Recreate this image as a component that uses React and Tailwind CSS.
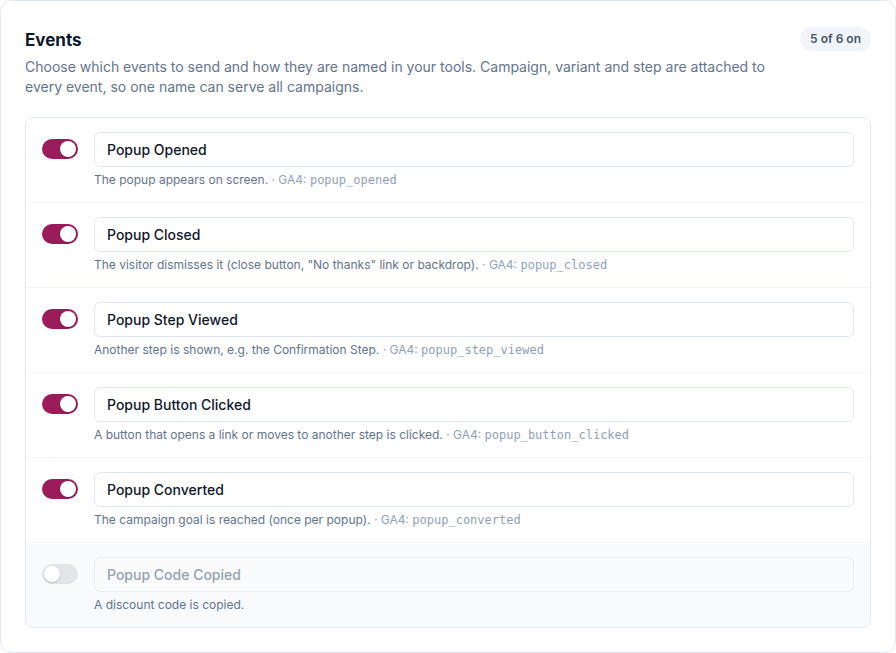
import { useState } from "react";

const EVENTS = [
  {
    id: "opened",
    name: "Popup Opened",
    hint: "The popup appears on screen.",
    ga4: "popup_opened",
    on: true,
  },
  {
    id: "closed",
    name: "Popup Closed",
    hint: 'The visitor dismisses it (close button, "No thanks" link or backdrop).',
    ga4: "popup_closed",
    on: true,
  },
  {
    id: "step",
    name: "Popup Step Viewed",
    hint: "Another step is shown, e.g. the Confirmation Step.",
    ga4: "popup_step_viewed",
    on: true,
  },
  {
    id: "button",
    name: "Popup Button Clicked",
    hint: "A button that opens a link or moves to another step is clicked.",
    ga4: "popup_button_clicked",
    on: true,
  },
  {
    id: "converted",
    name: "Popup Converted",
    hint: "The campaign goal is reached (once per popup).",
    ga4: "popup_converted",
    on: true,
  },
  {
    id: "code",
    name: "Popup Code Copied",
    hint: "A discount code is copied.",
    ga4: null,
    on: false,
  },
];

function Toggle({ checked, onChange }) {
  return (
    <button
      type="button"
      role="switch"
      aria-checked={checked}
      onClick={() => onChange(!checked)}
      className={`relative mt-[7px] h-[20px] w-[36px] shrink-0 rounded-full transition-colors ${
        checked ? "bg-[#9b1b5b]" : "bg-[#e4e5e8]"
      }`}
    >
      <span
        className={`absolute top-[2px] h-[16px] w-[16px] rounded-full bg-white shadow-[0_1px_2px_rgba(0,0,0,0.2)] transition-all ${
          checked ? "left-[18px]" : "left-[2px]"
        }`}
      />
    </button>
  );
}

function EventRow({ event, onToggle, onRename }) {
  const off = !event.on;
  return (
    <div
      className={`flex gap-4 border-b border-slate-100 px-[16px] pb-[14px] pt-[14px] last:border-b-0 ${
        off ? "bg-slate-50" : "bg-white"
      }`}
    >
      <Toggle checked={event.on} onChange={onToggle} />
      <div className="flex min-w-0 flex-1 flex-col gap-[5px]">
        <input
          value={event.name}
          disabled={off}
          onChange={(e) => onRename(e.target.value)}
          className={`h-[35px] w-full rounded-md border px-[12px] text-[14px] font-medium outline-none ${
            off
              ? "border-slate-200/70 bg-slate-50 text-gray-400"
              : "border-slate-200 bg-white text-slate-900"
          }`}
        />
        <p className="text-[12px] leading-[16px] text-slate-500">
          {event.hint}
          {event.ga4 && (
            <span className="text-slate-400">
              {" "}
              · GA4:{" "}
              <span className="font-['DejaVu_Sans_Mono',monospace] text-[12px]">
                {event.ga4}
              </span>
            </span>
          )}
        </p>
      </div>
    </div>
  );
}

export default function App() {
  const [events, setEvents] = useState(EVENTS);
  const onCount = events.filter((e) => e.on).length;

  const update = (id, patch) =>
    setEvents((list) => list.map((e) => (e.id === id ? { ...e, ...patch } : e)));

  return (
    <div className="min-h-screen bg-white font-['Inter',sans-serif]">
      <section className="rounded-xl border border-slate-200 bg-white px-[24px] pb-[24px] pt-[26px]">
        <div className="flex items-start justify-between gap-6">
          <h2 className="text-[17px] font-bold leading-[26px] text-slate-900">
            Events
          </h2>
          <span className="rounded-full bg-slate-100 px-[10px] py-[4px] text-[12px] font-semibold leading-[16px] text-slate-600">
            {onCount} of {events.length} on
          </span>
        </div>
        <p className="mt-[4px] max-w-[760px] text-[14px] leading-[20px] text-slate-500">
          Choose which events to send and how they are named in your tools.
          Campaign, variant and step are attached to every event, so one name
          can serve all campaigns.
        </p>

        <div className="mt-[20px] overflow-hidden rounded-lg border border-slate-200">
          {events.map((event) => (
            <EventRow
              key={event.id}
              event={event}
              onToggle={(on) => update(event.id, { on })}
              onRename={(name) => update(event.id, { name })}
            />
          ))}
        </div>
      </section>
    </div>
  );
}
